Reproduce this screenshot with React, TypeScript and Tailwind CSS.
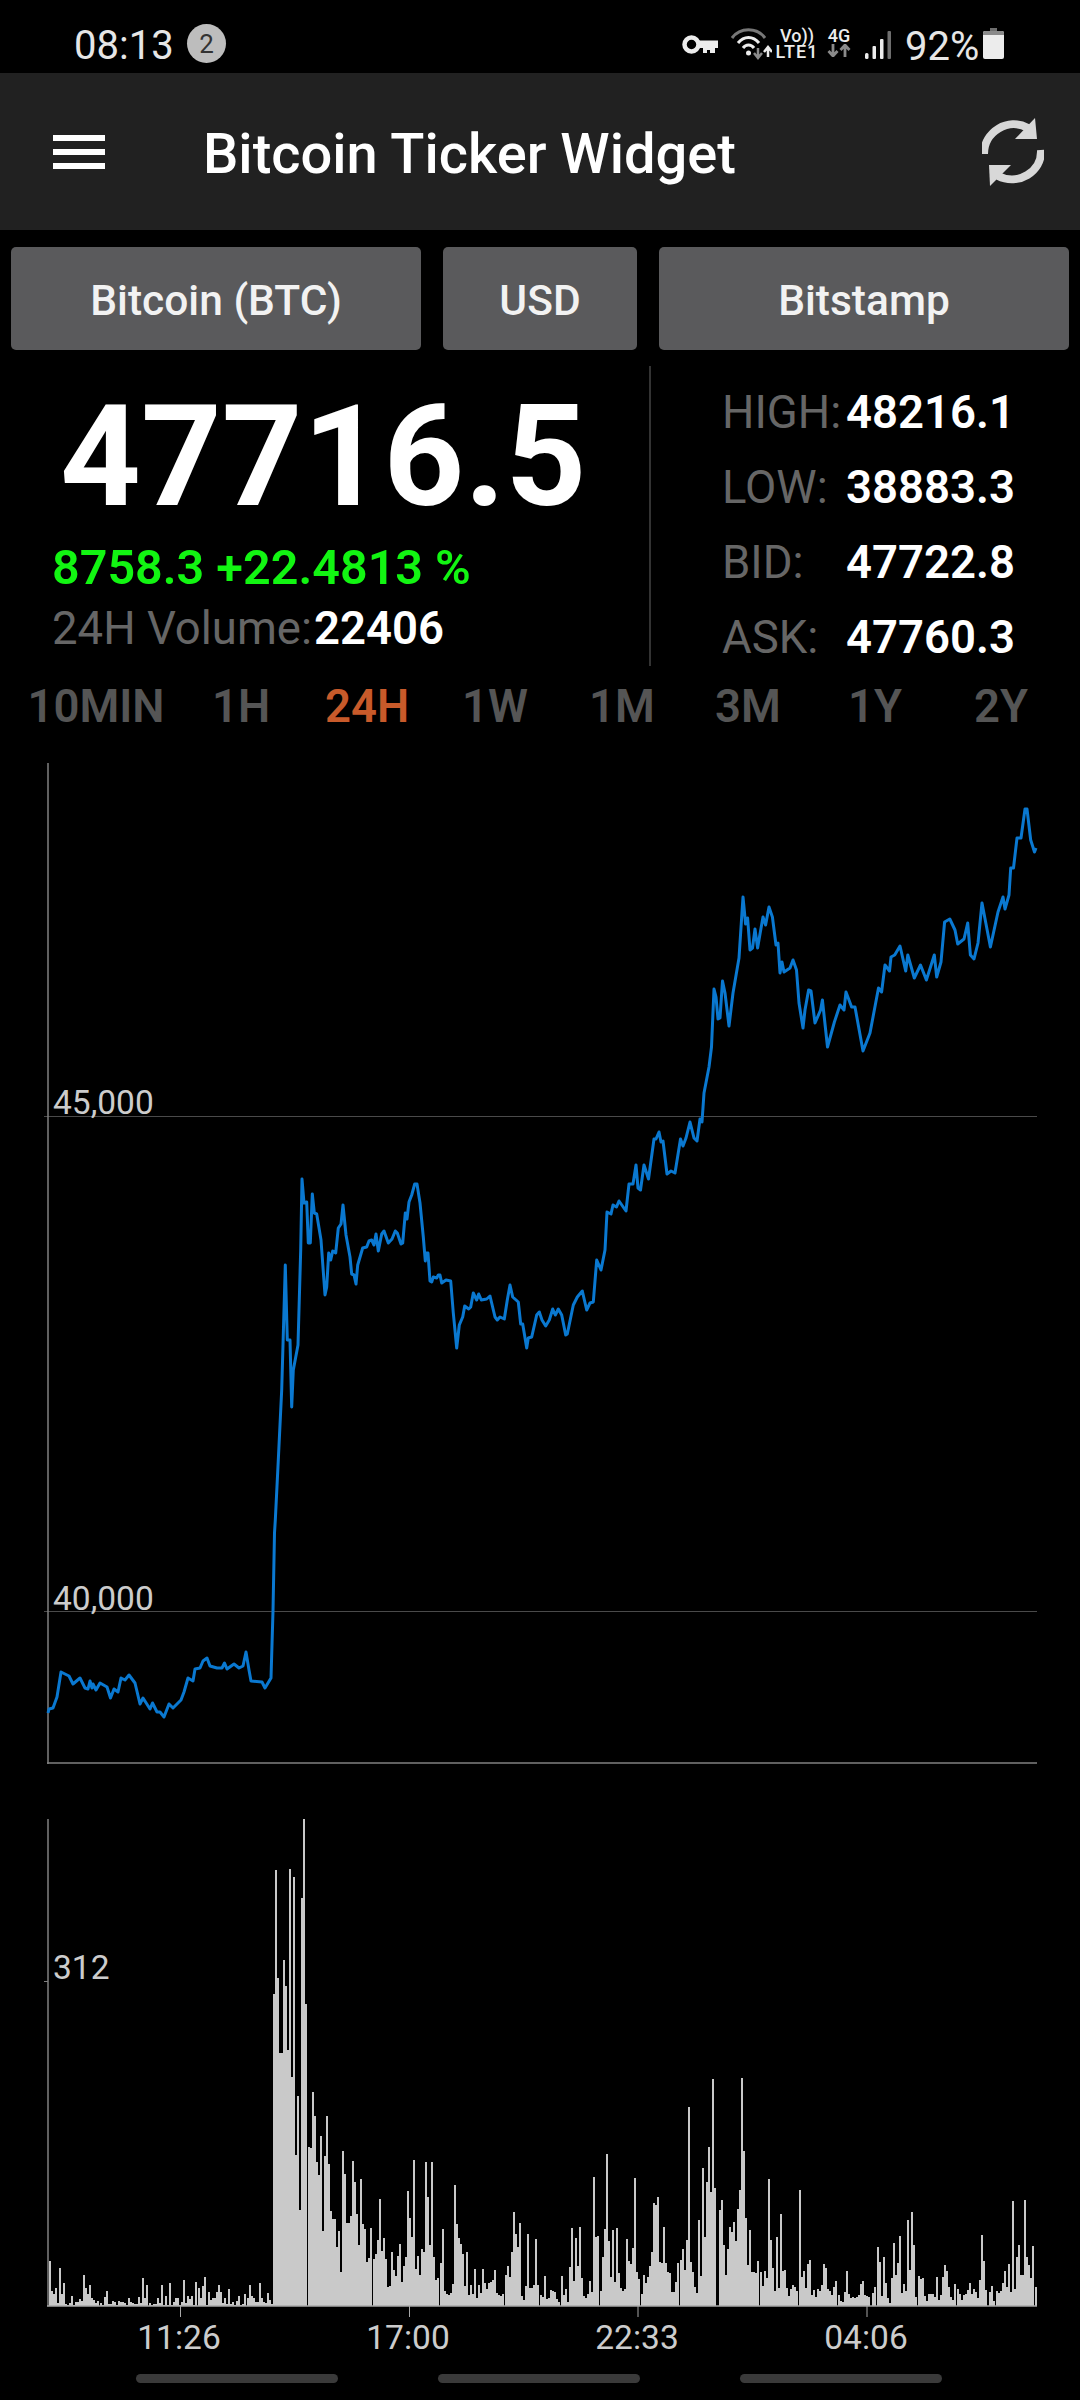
const PRICE: [number, number][] = [
[48,1713],[49,1709],[53,1708],[57,1697],[61,1672],[69,1676],[73,1684],[80,1678],[85,1688],[88,1689],[90,1681],[92,1688],[93,1684],[96,1690],[100,1683],[107,1687],[110.5,1698],[114,1689],[118,1692],[121,1678],[125,1680],[129,1675],[135,1683],[140,1704],[143,1698],[150,1709],[152.5,1703],[157,1712],[160,1712],[164,1717],[169,1704],[173,1708],[181,1700],[184,1692],[188,1678],[193,1681],[195,1669],[200,1668],[203,1661],[207,1658],[210,1666],[217,1668],[222,1668],[224.5,1663],[227,1669],[234,1664],[239,1668],[243,1666],[246,1652],[249,1670],[251,1681],[262,1682],[265,1688],[271,1678],[273,1611],[274.5,1533],[275.3,1520],[278.3,1460],[281.7,1390],[285.3,1265],[287.3,1340],[290,1340],[291.7,1407],[293.3,1370],[298,1345],[300.7,1250],[302,1179],[304,1203],[306.7,1202],[308.3,1243],[310.3,1243],[312.3,1194],[314.3,1213],[316.7,1214],[321,1240],[325,1295],[326.7,1287],[328.7,1253],[330.7,1260],[332.7,1251],[335.7,1253],[338.3,1228],[341,1224],[343,1205],[346,1235],[350,1257],[351.7,1274],[354,1275],[356,1284],[357.7,1265],[362.7,1248],[366.7,1247],[369,1241],[371.7,1240],[374,1245],[376,1234],[378.3,1251],[381.7,1234],[384,1231],[388.3,1243],[392,1239],[395.3,1231],[397.3,1233],[401,1244],[402.7,1243],[405.3,1213],[407,1219],[409,1202],[411.7,1195],[414.7,1184],[417,1184],[420,1203],[423.3,1237],[425.3,1261],[426.3,1253],[428,1253],[430,1281],[431.7,1282],[433.3,1277],[436.7,1278],[438.3,1275],[440,1275],[441.7,1283],[446,1280],[450.7,1281],[453.3,1313],[456.7,1348],[459.3,1325],[462.7,1317],[464.7,1306],[468.7,1309],[470.7,1307],[473.3,1293],[476.7,1300],[478.7,1294],[481.3,1300],[486.7,1299],[490,1296],[495,1317],[497.3,1320],[500,1317],[504.3,1319],[507.3,1300],[510,1285],[512.7,1297],[518.3,1302],[520.7,1324],[522.7,1324],[526.7,1348],[528.3,1338],[531.7,1337],[536.7,1315],[539.3,1312],[542,1320],[545.7,1326],[549.3,1320],[552.7,1309],[555.3,1315],[558.3,1309],[561.7,1315],[565.7,1335],[567.3,1334],[573.3,1305],[577.3,1297],[582.3,1291],[586.7,1310],[590,1303],[593.3,1302],[596.7,1260],[601,1270],[605,1250],[607,1212],[611,1214],[613,1205],[616.5,1207],[619,1201],[626,1211],[629,1184],[633,1184],[636,1165],[638,1188],[640.5,1190],[644,1165],[648.5,1179],[654,1139],[656,1139],[659,1132],[661,1142],[663,1141],[667,1174],[671,1171],[675,1173],[680.5,1139],[683,1146],[686,1138],[690,1122],[694,1138],[697,1141],[700,1119],[702,1122],[704,1093],[709,1067],[711.5,1047],[714,989],[716,997],[718,1019],[720,1018],[722.5,981],[725,993],[729,1026],[733,993],[739,958],[743,897],[745.6,924],[747.6,918],[750,950],[752.5,948],[755,929],[757.6,948],[760,934],[763,917],[765.6,925],[769,907],[772.4,917],[776,945],[778,943],[780,973],[782,962],[784,972],[790,968],[793,960],[796.5,970],[799,1003],[803,1028],[805,1010],[808.6,990],[811,991],[815,1023],[820.6,1010],[822.4,1000],[827.5,1047],[834.4,1022],[840,1005],[844,1010],[846,992],[851.6,1007],[855,1007],[863,1051],[870,1033],[878.5,988],[881.6,992],[885,965],[889.5,971],[891,957],[894.7,955],[900,946],[905.7,971],[907.8,955],[914.3,978],[920.5,965],[926.4,980],[934.3,955],[936.7,977],[941,962],[944.6,922],[949.8,919],[955,930],[957.7,944],[964,939],[967.7,923],[970.4,955],[974,959],[978,943],[982,903],[990.4,947],[998,912],[1003,897],[1005,909],[1009,895],[1010.7,868],[1013.5,868],[1017,838],[1021,838],[1025,809],[1027,809],[1030.7,840],[1034.5,852],[1036,848],
];

const VOL_A = [45,15,12,18,3,38,12,23,2,1,3,10,1,4,4,7,5,31,18,12,21,8,6,3,5,3,1,9,15,2,2,5,4,1,5,4,4,3,1,8,4,3,2,2,9,3,28,8,21,3,1,2,2,8,3,21,1,10,1,23,1,4,8,8,1,4,26,3,10,7,10,1,24,18,8,20,29,1,14,6,8,8,14,21,14,3,8,2,17,2,4,1,5,10,1,2,12,8,21,10,8,4,4,23,8,4,3,13,6,2];
const VOL_B = [312,436,328,253,253,346,320,256,437,229,429,151,210,96,408,487,302,159,158,214,190,144,131,170,75,150,190,142,95,87,87,59,75,34,155,132,83,83,90,145,124,92,61,127,82,77,44,48,78,47,52,66,107,55,68,47,19,20,54,36,30,50,62,24,40,49,115,88,69,146,37,50,31,57,54,144,109,61,144,49,26,28,43,77,15,12,11,13,22,121,82,68,62,52,20,54,11,21,12,37,8,21,13,37,23,17,23,24,26,36,13,11,10,12,31,40,29,54,94,72,59,83,10,6,20,72,18,18,21,67,21];
const VOL_C = [11,9,30,7,8,16,15,14,7,4,30,11,17,4,39,78,25,68,40,79,28,10,8,12,25,14,129,69,70,15,49,77,152,65,29,76,24,78,33,18,15,17,67,45,42,58,128,34,27,12,31,23,29,40,54,103,101,109,44,43,79,43,34,33,14,14,24,43,46,57,36,66,199,44,34,19,13,86,30,138,69,124,159,114,227,118,0,96,106,61,31,57,79,74,84,65,97,116,228,155,88,41,76,34,34,33,45,34,20,35,28,127,66,38,15,69,18,92,35,36,18,10,17,21,19,15,116,29,35,18,42,46,11,16,9,17,15,21,42,38,17,15,11,19,25,11,5,4,14,35,12,8,9,8,9,11,22,25,11,10,9,0,13,19,59,44,10,49,23,8,3,28,63,31,43,70,13,22,15,86,36,94,61,9,30,27,28,10,5,12,12,12,9,29,6,11,29,41,35,19,9,6,22,17,12,6,11,12,16,23,12,17,14,8,26,71,45,16,0,14,20,5,15,13,15,23,35,19,42,14,105,17,49,61,31,31,106,49,41,28,60,19];

type Bar = { x: number; h: number };
function spread(values: number[], start: number, end: number): Bar[] {
  return values.map((h, i) => ({ x: Math.round(start + (i * (end - start)) / (values.length - 1)), h }));
}
const BARS: Bar[] = [...spread(VOL_A, 48.5, 271), ...spread(VOL_B, 273, 537), ...spread(VOL_C, 540, 1034.5)];

const TABS = ["10MIN", "1H", "24H", "1W", "1M", "3M", "1Y", "2Y"];
const RIGHT = [
  ["HIGH:", "48216.1"],
  ["LOW:", "38883.3"],
  ["BID:", "47722.8"],
  ["ASK:", "47760.3"],
];

function Arrows({ color = "#8a8a8a" }: { color?: string }) {
  return (
    <svg width="24" height="13" viewBox="0 0 24 13">
      <path d="M6 0v11M1.500 7L6 12l4.500-5" fill="none" stroke={color} strokeWidth="2.800" />
      <path d="M18 13V2M13.500 6L18 1l4.500 5" fill="none" stroke={color} strokeWidth="2.800" />
    </svg>
  );
}

function StatusBar() {
  return (
    <div className="flex h-[73px] items-start pl-[74px] pt-[24px] text-[#e6e6e6]">
      <span className="mt-[3px] w-[113px] text-[40px] leading-[38px]">08:13</span>
      <span className="flex h-[39px] w-[39px] items-center justify-center rounded-full bg-[#bdbdbd] text-[26px] leading-none text-[#333333]">2</span>
      <div className="ml-[456px] mt-[4px] flex h-[32px] items-start">
        <svg className="mt-[7px]" width="36" height="20" viewBox="0 0 36 20">
          <circle cx="9.500" cy="9.500" r="7" fill="none" stroke="#ececec" strokeWidth="4.500" />
          <path d="M16 5.500h20v7.500h-3v5h-5v-3h-3v3h-4v-5h-5z" fill="#ececec" />
        </svg>
        <svg className="ml-[13px]" width="41" height="32" viewBox="0 0 41 32">
          <path d="M1 10C9 -1 26 -1 34 10" fill="none" stroke="#777777" strokeWidth="3" />
          <path d="M7 15C13 7.500 22 7.500 28 15" fill="none" stroke="#ececec" strokeWidth="3" />
          <path d="M12 20C15 16 20 16 23 20" fill="none" stroke="#ececec" strokeWidth="3" />
          <circle cx="17.500" cy="25" r="2.500" fill="#ececec" />
          <path d="M27 20v9M23 25l4 5 4-5" fill="none" stroke="#8a8a8a" strokeWidth="2.500" />
          <path d="M37 29v-9M33 24l4-5 4 5" fill="none" stroke="#ececec" strokeWidth="2.500" />
        </svg>
        <div className="ml-[6px] flex w-[38px] flex-col items-center text-[18px] font-medium leading-[16px] text-[#ececec]">
          <span className="whitespace-nowrap">Vo))</span>
          <span className="whitespace-nowrap tracking-[1px]">LTE1</span>
        </div>
        <div className="ml-[11px] flex w-[24px] flex-col items-center text-[18px] font-medium leading-[16px] text-[#ececec]">
          <span>4G</span>
          <Arrows />
        </div>
        <svg className="ml-[14px] mt-[3px]" width="26" height="28" viewBox="0 0 26 28">
          <rect x="0" y="22" width="3.500" height="6" rx="1.500" fill="#ececec" />
          <rect x="7.500" y="15" width="3.500" height="13" rx="1" fill="#ececec" />
          <rect x="15" y="8" width="3.500" height="20" rx="1" fill="#ececec" />
          <rect x="22.500" y="0" width="3.500" height="28" rx="1" fill="#6e6e6e" />
        </svg>
        <span className="ml-[14px] w-[78px] text-[40px] leading-[38px]">92%</span>
        <svg width="21" height="31" viewBox="0 0 21 31">
          <path d="M7 0h7v3h-7z" fill="#6e6e6e" />
          <path d="M2 3h17a2 2 0 0 1 2 2v24a2 2 0 0 1-2 2H2a2 2 0 0 1-2-2V5a2 2 0 0 1 2-2z" fill="#ececec" />
          <path d="M2 3h17a2 2 0 0 1 2 2v2H0V5a2 2 0 0 1 2-2z" fill="#8a8a8a" />
        </svg>
      </div>
    </div>
  );
}

function Header() {
  return (
    <div className="flex h-[157px] items-center bg-[#212121]">
      <div className="ml-[53px] flex w-[52px] flex-col gap-[8px]">
        <div className="h-[6px] bg-white" />
        <div className="h-[6px] bg-white" />
        <div className="h-[6px] bg-white" />
      </div>
      <span className="ml-[98px] mt-[4px] text-[56px] font-medium leading-[54px] text-white">Bitcoin Ticker Widget</span>
      <svg className="ml-auto mr-[36px]" width="62" height="68" viewBox="0 0 62 68">
        <path d="M2 36C2 14 26 -1 46 10" fill="none" stroke="#d8d8d8" strokeWidth="8" />
        <path d="M53 0l2 21H33z" fill="#d8d8d8" />
        <path d="M59 32C60 54 36 68 16 58" fill="none" stroke="#d8d8d8" strokeWidth="8" />
        <path d="M8 68L7 47h22z" fill="#d8d8d8" />
      </svg>
    </div>
  );
}

function Buttons() {
  const cls = "flex h-[103px] items-center justify-center rounded-[5px] bg-[#5a5a5c] pt-[4px] text-[42.5px] font-medium leading-[42px] text-[#f2f2f2]";
  return (
    <div className="flex gap-[22px] px-[11px] pt-[17px]">
      <div className={`${cls} w-[410px]`}>Bitcoin (BTC)</div>
      <div className={`${cls} w-[194px]`}>USD</div>
      <div className={`${cls} w-[410px]`}>Bitstamp</div>
    </div>
  );
}

function Stats() {
  return (
    <div className="mt-[16px] flex h-[300px]">
      <div className="w-[649px] pl-[52px] pt-[21px]">
        <div className="ml-[8px] text-[141px] font-bold leading-[140px] text-white">47716.5</div>
        <div className="mt-[17px] text-[48.5px] font-semibold leading-[48px] text-[#12f512]">8758.3 +22.4813 %</div>
        <div className="mt-[14px] flex text-[45.5px] leading-[45px]">
          <span className="w-[262px] text-[#666666]">24H Volume:</span>
          <span className="font-semibold text-white">22406</span>
        </div>
      </div>
      <div className="h-full w-[2px] bg-[#333333]" />
      <div className="pl-[71px] pt-[9px]">
        {RIGHT.map(([label, value]) => (
          <div key={label} className="flex h-[75px] text-[45.5px] leading-[75px]">
            <span className="w-[124px] text-[#666666]">{label}</span>
            <span className="font-semibold text-white">{value}</span>
          </div>
        ))}
      </div>
    </div>
  );
}

function Tabs() {
  return (
    <div className="mt-[18px] grid grid-cols-[152px_138px_114px_142px_112px_140px_114px_138px] pl-[20px] text-center text-[45.5px] font-semibold leading-[45px] text-[#555555]">
      {TABS.map((t) => (
        <span key={t} className={t === "24H" ? "text-[#c85a2a]" : ""}>{t}</span>
      ))}
    </div>
  );
}

function PriceChart() {
  const pts = PRICE.map(([x, y]) => `${x},${y}`).join(" ");
  return (
    <div className="relative mt-[34px] h-[1002px] text-[33.5px] leading-[33px] text-[#cccccc]">
      <svg className="block" width="1080" height="1002" viewBox="0 763 1080 1002">
        <line x1="44" x2="1037" y1="1116.500" y2="1116.500" stroke="#4a4a4a" strokeWidth="1" />
        <line x1="44" x2="1037" y1="1611.500" y2="1611.500" stroke="#4a4a4a" strokeWidth="1" />
        <line x1="48" x2="48" y1="763" y2="1764" stroke="#808080" strokeWidth="1.500" />
        <line x1="47" x2="1037" y1="1763" y2="1763" stroke="#808080" strokeWidth="1.500" />
        <polyline points={pts} fill="none" stroke="#0a78d0" strokeWidth="3" strokeLinejoin="round" />
      </svg>
      <span className="absolute left-[53px] top-[323px]">45,000</span>
      <span className="absolute left-[53px] top-[819px]">40,000</span>
    </div>
  );
}

function VolumeChart() {
  return (
    <div className="relative mt-[54px] h-[499px] text-[33.5px] leading-[33px] text-[#cccccc]">
      <svg className="block" width="1080" height="499" viewBox="0 1819 1080 499">
        <line x1="48" x2="48" y1="1819" y2="2306" stroke="#808080" strokeWidth="1.500" />
        <line x1="44" x2="48" y1="1981.500" y2="1981.500" stroke="#808080" strokeWidth="1" />
        {BARS.map((b, i) => (
          b.h > 0 ? <rect key={i} x={b.x} y={2306 - b.h} width="2" height={b.h} fill="#c9c9c9" shapeRendering="crispEdges" /> : null
        ))}
        <line x1="47" x2="1037" y1="2306" y2="2306" stroke="#a8a8a8" strokeWidth="1.500" />
        {[180.5, 409.5, 638, 867].map((x) => (
          <line key={x} x1={x} x2={x} y1="2306" y2="2317" stroke="#a8a8a8" strokeWidth="1" />
        ))}
      </svg>
      <span className="absolute left-[53px] top-[132px]">312</span>
    </div>
  );
}

function TimeAxis() {
  return (
    <div className="relative h-[40px] text-[33.5px] leading-[33px] text-[#cccccc]">
      {[["11:26", "left-[137px]"], ["17:00", "left-[366px]"], ["22:33", "left-[595px]"], ["04:06", "left-[824px]"]].map(([t, c]) => (
        <span key={t} className={`absolute top-[3px] w-[84px] text-center ${c}`}>{t}</span>
      ))}
    </div>
  );
}

function NavBar() {
  return (
    <div className="mt-[16px] flex gap-[100px] pl-[136px]">
      <div className="h-[9px] w-[202px] rounded-full bg-[#3a3a3a]" />
      <div className="h-[9px] w-[202px] rounded-full bg-[#3a3a3a]" />
      <div className="h-[9px] w-[202px] rounded-full bg-[#3a3a3a]" />
    </div>
  );
}

export default function App() {
  return (
    <div className="h-[2400px] w-[1080px] overflow-hidden bg-black font-['Roboto',sans-serif]">
      <StatusBar />
      <Header />
      <Buttons />
      <Stats />
      <Tabs />
      <PriceChart />
      <VolumeChart />
      <TimeAxis />
      <NavBar />
    </div>
  );
}
